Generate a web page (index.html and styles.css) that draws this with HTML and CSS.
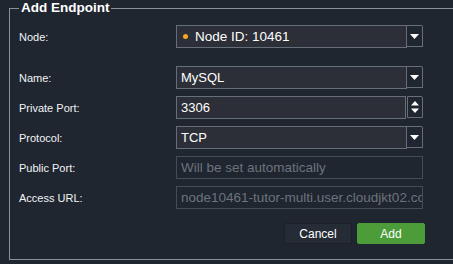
FILE: index.html
```
<!DOCTYPE html>
<html>
<head>
<meta charset="utf-8">
<link rel="stylesheet" href="styles.css">
</head>
<body>
<fieldset class="panel">
  <legend class="panel-title">Add Endpoint</legend>
  <div class="form">
    <div class="row row-node">
      <span class="label">Node:</span>
      <div class="control">
        <div class="field field-active"><span class="dot"></span><span class="value">Node ID: 10461</span></div>
        <div class="side-btn">
          <svg width="9" height="5" viewBox="0 0 9 5"><path d="M0 0h9L4.5 5z" fill="#fff"/></svg>
        </div>
      </div>
    </div>
    <div class="row">
      <span class="label">Name:</span>
      <div class="control">
        <div class="field field-active"><span class="value">MySQL</span></div>
        <div class="side-btn">
          <svg width="9" height="5" viewBox="0 0 9 5"><path d="M0 0h9L4.5 5z" fill="#fff"/></svg>
        </div>
      </div>
    </div>
    <div class="row">
      <span class="label">Private Port:</span>
      <div class="control">
        <div class="field field-active field-spin"><span class="value">3306</span></div>
        <div class="side-btn spin-btn">
          <svg width="8" height="12" viewBox="0 0 8 12"><path d="M0 4.5h8L4 0z M0 7.5h8L4 12z" fill="#fff"/></svg>
        </div>
      </div>
    </div>
    <div class="row">
      <span class="label">Protocol:</span>
      <div class="control">
        <div class="field field-active"><span class="value">TCP</span></div>
        <div class="side-btn">
          <svg width="9" height="5" viewBox="0 0 9 5"><path d="M0 0h9L4.5 5z" fill="#fff"/></svg>
        </div>
      </div>
    </div>
    <div class="row">
      <span class="label">Public Port:</span>
      <div class="control">
        <div class="field field-disabled"><span class="value">Will be set automatically</span></div>
      </div>
    </div>
    <div class="row">
      <span class="label">Access URL:</span>
      <div class="control">
        <div class="field field-disabled"><span class="value">node10461-tutor-multi.user.cloudjkt02.com</span></div>
      </div>
    </div>
  </div>
  <div class="actions">
    <button class="btn btn-cancel">Cancel</button>
    <button class="btn btn-add">Add</button>
  </div>
</fieldset>
</body>
</html>
```
FILE: styles.css
```
html, body {
  margin: 0;
  padding: 0;
  background: #1f2630;
  overflow: hidden;
  width: 453px;
  height: 264px;
}
body {
  font-family: "Liberation Sans", Arial, sans-serif;
  color: #fff;
}
.panel {
  margin: 0 0 0 9px;
  padding: 9px 0 15px 9px;
  border: 1px solid #8a919b;
  width: 480px;
  box-sizing: border-box;
  min-width: 0;
}
.panel-title {
  padding: 0 2px;
  margin: 0;
  font-size: 13.5px;
  font-weight: bold;
  line-height: 16px;
  color: #fff;
}
.form {
  display: flex;
  flex-direction: column;
  gap: 7px;
  width: 406px;
}
.row {
  display: grid;
  grid-template-columns: 157px 247px;
  align-items: center;
  height: 23px;
}
.row-node {
  margin-bottom: 11px;
}
.label {
  font-size: 11px;
  color: #f2f4f6;
}
.control {
  display: flex;
  height: 23px;
}
.field {
  box-sizing: border-box;
  height: 23px;
  display: flex;
  align-items: center;
  padding: 0 4px;
  font-size: 13px;
  overflow: hidden;
  white-space: nowrap;
}
.field-active {
  width: 231px;
  background: #2c2f37;
  border: 1px solid #666e7a;
  color: #fff;
}
.field-spin {
  width: 230px;
  margin-right: 1px;
}
.field-disabled {
  width: 247px;
  border: 1px solid #454c57;
  color: #6d737c;
  font-size: 13.5px;
}
.dot {
  width: 5px;
  height: 5px;
  border-radius: 50%;
  background: #f5a623;
  margin: 0 7px 0 2px;
  flex: none;
}
.row-node .value {
  font-size: 13.5px;
}
.side-btn {
  box-sizing: border-box;
  width: 16px;
  height: 22px;
  border: 1px solid #666e7a;
  border-left: none;
  border-top-right-radius: 2px;
  display: flex;
  align-items: center;
  justify-content: center;
}
.spin-btn {
  border-left: 1px solid #666e7a;
  height: 22px;
}
.actions {
  width: 406px;
  display: flex;
  justify-content: flex-end;
  gap: 5px;
  margin-top: 14px;
}
.btn {
  width: 68px;
  height: 21px;
  border-radius: 2px;
  font-family: "Liberation Sans", Arial, sans-serif;
  font-size: 12px;
  color: #fff;
  padding: 0;
  cursor: pointer;
}
.btn-cancel {
  background: #262c36;
  border: 1px solid #1b2028;
}
.btn-add {
  background: #4c9c3a;
  border: 1px solid #4c9c3a;
}
```
